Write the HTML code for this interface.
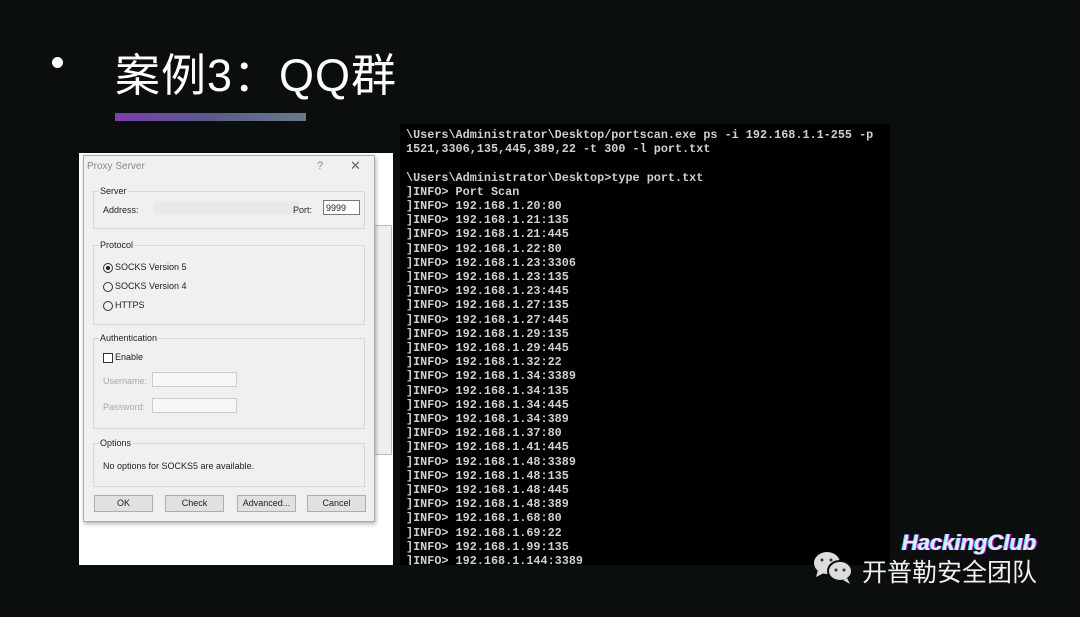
<!DOCTYPE html>
<html><head><meta charset="utf-8"><style>
*{margin:0;padding:0;box-sizing:border-box}
body{width:1080px;height:617px;overflow:hidden;background:#0a0f0d;position:relative;font-family:"Liberation Sans","Noto Sans CJK SC",sans-serif}
.abs{position:absolute}
.title{left:115px;top:39px;font-size:45px;color:#fff;letter-spacing:1px}
.dot{left:52px;top:57px;width:11px;height:11px;border-radius:50%;background:#fff}
.bar{left:115px;top:113px;width:191px;height:8px;background:linear-gradient(90deg,#7b3fb0,#5a5a8c 50%,#6a7a88)}
.term{left:400px;top:124px;width:490px;height:441px;background:#000;font-family:"Liberation Mono",monospace;font-size:11.8px;color:#d0d0d0;font-weight:bold;line-height:14.2px;white-space:pre;overflow:hidden;padding-left:6px;padding-top:4px}
.white{left:79px;top:153px;width:314px;height:412px;background:#fff}
.back{left:83px;top:225px;width:309px;height:230px;background:#eee;border:1px solid #bbb}
.dlg{left:83px;top:155px;width:292px;height:367px;background:#f0f0f0;border:1px solid #aaa;box-shadow:1px 2px 4px rgba(0,0,0,.3);font-size:9px;color:#222}
.grp{position:absolute;left:9px;width:272px;border:1px solid #d8d8d8}
.lbl{position:absolute;top:-6px;left:5px;background:#f0f0f0;padding:0 1px}
.btn{position:absolute;top:339px;width:59px;height:17px;border:1px solid #adadad;background:#e1e1e1;text-align:center;line-height:15px}
.rad{display:inline-block;width:10px;height:10px;border:1px solid #333;border-radius:50%;vertical-align:middle;margin-right:2px;position:relative}
.inp{position:absolute;background:#f7f7f7;border:1px solid #ccc;height:15px}
</style></head><body>
<div class="abs dot"></div>
<div class="abs title">案例3：QQ群</div>
<div class="abs bar"></div>
<div class="abs term">\Users\Administrator\Desktop/portscan.exe ps -i 192.168.1.1-255 -p
1521,3306,135,445,389,22 -t 300 -l port.txt

\Users\Administrator\Desktop>type port.txt
]INFO> Port Scan
]INFO> 192.168.1.20:80
]INFO> 192.168.1.21:135
]INFO> 192.168.1.21:445
]INFO> 192.168.1.22:80
]INFO> 192.168.1.23:3306
]INFO> 192.168.1.23:135
]INFO> 192.168.1.23:445
]INFO> 192.168.1.27:135
]INFO> 192.168.1.27:445
]INFO> 192.168.1.29:135
]INFO> 192.168.1.29:445
]INFO> 192.168.1.32:22
]INFO> 192.168.1.34:3389
]INFO> 192.168.1.34:135
]INFO> 192.168.1.34:445
]INFO> 192.168.1.34:389
]INFO> 192.168.1.37:80
]INFO> 192.168.1.41:445
]INFO> 192.168.1.48:3389
]INFO> 192.168.1.48:135
]INFO> 192.168.1.48:445
]INFO> 192.168.1.48:389
]INFO> 192.168.1.68:80
]INFO> 192.168.1.69:22
]INFO> 192.168.1.99:135
]INFO> 192.168.1.144:3389</div>
<div class="abs white"></div>
<div class="abs back"></div>
<div class="abs dlg">
 <div class="abs" style="left:3px;top:5px;color:#888;font-size:10px">Proxy Server</div>
 <div class="abs" style="left:233px;top:4px;color:#888;font-size:11px">?</div>
 <div class="abs" style="left:266px;top:2px;color:#666;font-size:13px">✕</div>
 <div class="grp" style="top:35px;height:38px"><span class="lbl">Server</span>
  <span class="abs" style="left:9px;top:13px">Address:</span>
  <div class="abs" style="left:60px;top:9px;width:145px;height:14px;background:#e6e6e6;opacity:.6"></div>
  <span class="abs" style="left:199px;top:13px">Port:</span>
  <div class="inp" style="left:229px;top:8px;width:37px;background:#fff;border-color:#777;padding:2px;font-size:9px">9999</div>
 </div>
 <div class="grp" style="top:89px;height:80px"><span class="lbl">Protocol</span>
  <div class="abs" style="left:9px;top:16px"><span class="rad"><span class="abs" style="left:2px;top:2px;width:4px;height:4px;background:#222;border-radius:50%"></span></span>SOCKS Version 5</div>
  <div class="abs" style="left:9px;top:35px"><span class="rad"></span>SOCKS Version 4</div>
  <div class="abs" style="left:9px;top:54px"><span class="rad"></span>HTTPS</div>
 </div>
 <div class="grp" style="top:182px;height:91px"><span class="lbl">Authentication</span>
  <div class="abs" style="left:9px;top:13px"><span style="display:inline-block;width:10px;height:10px;border:1px solid #333;background:#fff;vertical-align:middle;margin-right:2px"></span>Enable</div>
  <span class="abs" style="left:9px;top:37px;color:#aaa">Username:</span>
  <div class="inp" style="left:58px;top:33px;width:85px"></div>
  <span class="abs" style="left:9px;top:63px;color:#aaa">Password:</span>
  <div class="inp" style="left:58px;top:59px;width:85px"></div>
 </div>
 <div class="grp" style="top:287px;height:44px"><span class="lbl">Options</span>
  <span class="abs" style="left:9px;top:17px">No options for SOCKS5 are available.</span>
 </div>
 <div class="btn" style="left:10px">OK</div>
 <div class="btn" style="left:81px">Check</div>
 <div class="btn" style="left:153px">Advanced...</div>
 <div class="btn" style="left:223px">Cancel</div>
</div>
<svg class="abs" style="left:812px;top:550px" width="44" height="36" viewBox="0 0 44 36"><ellipse cx="15" cy="13" rx="13" ry="11" fill="#ddd"/><path d="M6 20 L4 27 L12 23Z" fill="#ddd"/><ellipse cx="28" cy="21" rx="12" ry="10" fill="#ddd" stroke="#0a0f0d" stroke-width="2"/><path d="M35 28 L38 34 L31 30Z" fill="#ddd"/><circle cx="10" cy="10" r="1.5" fill="#333"/><circle cx="19" cy="10" r="1.5" fill="#333"/><circle cx="24" cy="20" r="1.5" fill="#333"/><circle cx="32" cy="20" r="1.5" fill="#333"/></svg>
<div class="abs" style="left:862px;top:553px;font-size:25px;color:#f0f0f0">开普勒安全团队</div>
<div class="abs" style="left:902px;top:530px;font-size:22px;color:#e8e8ff;font-weight:bold;font-style:italic;text-shadow:1px 0 #f0f,-1px 0 #0ff">HackingClub</div>
</body></html>
